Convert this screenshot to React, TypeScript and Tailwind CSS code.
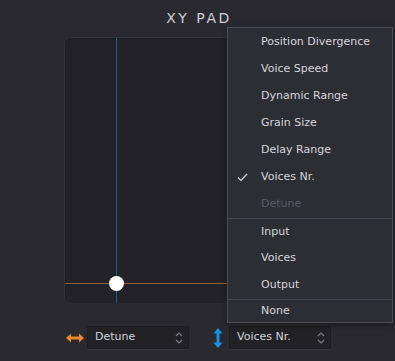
import React from "react";

const font = { fontFamily: '"DejaVu Sans", "Noto Sans", sans-serif' };

type Item = { label: string; checked?: boolean; disabled?: boolean; sep?: boolean };

const items: Item[] = [
  { label: "Position Divergence" },
  { label: "Voice Speed" },
  { label: "Dynamic Range" },
  { label: "Grain Size" },
  { label: "Delay Range" },
  { label: "Voices Nr.", checked: true },
  { label: "Detune", disabled: true },
  { label: "Input", sep: true },
  { label: "Voices" },
  { label: "Output" },
  { label: "None", sep: true },
];

function Chevrons() {
  return (
    <svg width="8" height="14" viewBox="0 0 8 14" fill="none" stroke="#7c7c84" strokeWidth="1.2">
      <path d="M1 5 L4 2 L7 5" />
      <path d="M1 9 L4 12 L7 9" />
    </svg>
  );
}

function Select({ label }: { label: string }) {
  return (
    <div className="flex h-[23px] w-[102px] items-center justify-between rounded-[2px] border border-[#1c1c21] bg-[#212126] pl-[7px] pr-[5px] shadow-[0_1px_0_#34343b]">
      <span className="text-[11px] text-[#d4d4da]">{label}</span>
      <Chevrons />
    </div>
  );
}

export default function App() {
  return (
    <div className="relative h-[361px] w-[395px] overflow-hidden bg-[#29292f]" style={font}>
      <div className="flex h-[37px] items-start justify-center pt-[8px]">
        <span className="pl-[3px] text-[14px] font-normal tracking-[2.5px] text-[#cfcfd6]">XY PAD</span>
      </div>

      <div className="relative ml-[64px] h-[266px] w-[267px] rounded-[6px] border-t border-l border-[#33333a] bg-[#222228] shadow-[inset_1px_1px_0_#1d1d22]">
        <div className="absolute top-0 bottom-0 left-[51px] w-px bg-[#1d6284]" />
        <div className="absolute left-0 right-0 top-[245px] h-px bg-[#8a5e3c]" />
        <div className="absolute left-[44px] top-[238px] h-[15px] w-[15px] rounded-full bg-white" />
      </div>

      <div className="mt-[23px] flex items-center">
        <div className="ml-[66px] flex w-[21px] items-center">
          <svg width="18" height="10" viewBox="0 0 18 10" fill="#e8892c">
            <path d="M0 5 L5 0.5 L5 3.5 L13 3.5 L13 0.5 L18 5 L13 9.5 L13 6.5 L5 6.5 L5 9.5 Z" />
          </svg>
        </div>
        <Select label="Detune" />
        <div className="ml-[24px] flex w-[16px] items-center">
          <svg width="10" height="20" viewBox="0 0 10 20" fill="#1a90e6">
            <path d="M5 0 L9.5 5.5 L6.5 5.5 L6.5 14.5 L9.5 14.5 L5 20 L0.5 14.5 L3.5 14.5 L3.5 5.5 L0.5 5.5 Z" />
          </svg>
        </div>
        <Select label="Voices Nr." />
      </div>

      <div className="absolute left-[227px] top-[27px] w-[166px] border border-[#4d4d55] bg-[#2d2d34] pt-px shadow-[0_2px_6px_rgba(0,0,0,0.4)]">
        {items.map((item, i) => (
          <div
            key={item.label}
            className={`relative flex items-center pl-[33px] text-[11px] ${i === items.length - 1 ? "h-[23px]" : "h-[27px]"} ${
              item.sep ? "border-t border-[#45454d]" : ""
            } ${item.disabled ? "text-[#5c5c63]" : "text-[#d6d6dc]"}`}
          >
            {item.checked && (
              <svg className="absolute left-[9px] top-[9px]" width="11" height="9" viewBox="0 0 11 9" fill="none" stroke="#c8c8ce" strokeWidth="1.4">
                <path d="M1 4.5 L4 7.5 L10 1" />
              </svg>
            )}
            {item.label}
          </div>
        ))}
      </div>
    </div>
  );
}
